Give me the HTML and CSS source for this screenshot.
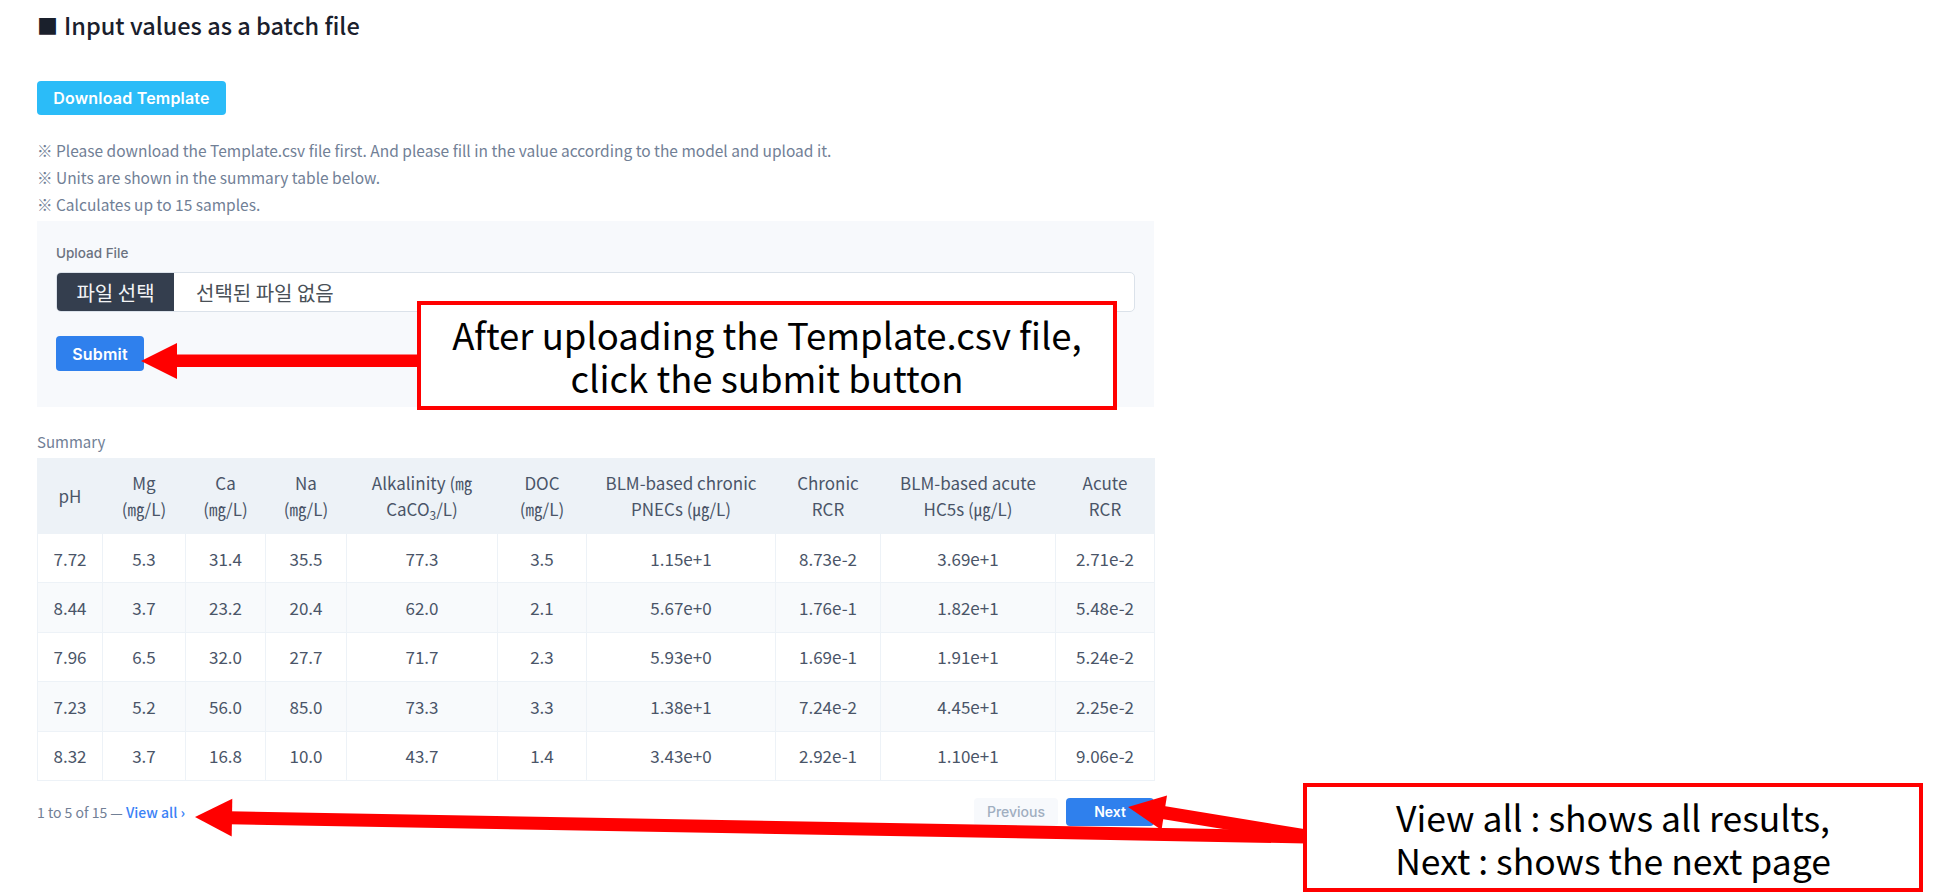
FILE: index.html
```html
<!DOCTYPE html>
<html lang="en">
<head>
<meta charset="utf-8">
<title>Input values as a batch file</title>
<link rel="stylesheet" href="styles.css">
</head>
<body>
<div class="page">
  <h2 class="title"><span class="sq">■</span>Input values as a batch file</h2>
  <button class="btn btn-sky" type="button">Download Template</button>
  <ul class="notes">
    <li>※ Please download the Template.csv file first. And please fill in the value according to the model and upload it.</li>
    <li>※ Units are shown in the summary table below.</li>
    <li>※ Calculates up to 15 samples.</li>
  </ul>
  <div class="panel">
    <div class="label">Upload File</div>
    <div class="file">
      <span class="file-btn">파일 선택</span>
      <span class="file-name">선택된 파일 없음</span>
    </div>
    <button class="btn btn-blue submit" type="button">Submit</button>
  </div>
  <div class="caption">Summary</div>
  <table class="summary">
    <colgroup>
      <col class="w-ph"><col class="w-mg"><col class="w-ca"><col class="w-na"><col class="w-alk">
      <col class="w-doc"><col class="w-pnec"><col class="w-crcr"><col class="w-hc5"><col class="w-arcr">
    </colgroup>
    <thead>
      <tr>
        <th>pH</th>
        <th>Mg<br>(㎎/L)</th>
        <th>Ca<br>(㎎/L)</th>
        <th>Na<br>(㎎/L)</th>
        <th>Alkalinity (㎎<br>CaCO<sub>3</sub>/L)</th>
        <th>DOC<br>(㎎/L)</th>
        <th>BLM-based chronic<br>PNECs (㎍/L)</th>
        <th>Chronic<br>RCR</th>
        <th>BLM-based acute<br>HC5s (㎍/L)</th>
        <th>Acute<br>RCR</th>
      </tr>
    </thead>
    <tbody>
      <tr><td>7.72</td><td>5.3</td><td>31.4</td><td>35.5</td><td>77.3</td><td>3.5</td><td>1.15e+1</td><td>8.73e-2</td><td>3.69e+1</td><td>2.71e-2</td></tr>
      <tr><td>8.44</td><td>3.7</td><td>23.2</td><td>20.4</td><td>62.0</td><td>2.1</td><td>5.67e+0</td><td>1.76e-1</td><td>1.82e+1</td><td>5.48e-2</td></tr>
      <tr><td>7.96</td><td>6.5</td><td>32.0</td><td>27.7</td><td>71.7</td><td>2.3</td><td>5.93e+0</td><td>1.69e-1</td><td>1.91e+1</td><td>5.24e-2</td></tr>
      <tr><td>7.23</td><td>5.2</td><td>56.0</td><td>85.0</td><td>73.3</td><td>3.3</td><td>1.38e+1</td><td>7.24e-2</td><td>4.45e+1</td><td>2.25e-2</td></tr>
      <tr><td>8.32</td><td>3.7</td><td>16.8</td><td>10.0</td><td>43.7</td><td>1.4</td><td>3.43e+0</td><td>2.92e-1</td><td>1.10e+1</td><td>9.06e-2</td></tr>
    </tbody>
  </table>
  <div class="pager">
    <div class="count">1 to 5 of 15 — <a class="view-all" href="#">View all <span class="chev">›</span></a></div>
    <div class="nav">
      <button class="pg prev" type="button">Previous</button>
      <button class="pg next" type="button">Next</button>
    </div>
  </div>
</div>

<svg class="arrows" width="1936" height="896" viewBox="0 0 1936 896" aria-hidden="true">
  <g fill="#ff0000" stroke="none">
    <rect x="175" y="354.5" width="244" height="12.5"/>
    <polygon points="141,361 177,343 177,379"/>
    <polygon points="195,817 232.3,798.7 231.7,836.6"/>
    <polygon points="1128,807 1167,795.5 1161.5,830"/>
  </g>
  <g stroke="#ff0000" stroke-width="13" fill="none">
    <line x1="1306" y1="837" x2="229" y2="817.7"/>
    <line x1="1306" y1="836" x2="1163" y2="812.5"/>
  </g>
</svg>

<div class="callout callout-1">After uploading the Template.csv file,<br>click the submit button</div>
<div class="callout callout-2">View all : shows all results,<br>Next : shows the next page</div>
</body>
</html>
```

FILE: styles.css
```css
* { box-sizing: border-box; }

html, body {
  margin: 0;
  padding: 0;
  background: #ffffff;
}

body {
  position: relative;
  width: 1936px;
  height: 896px;
  overflow: hidden;
  font-family: "Noto Sans CJK KR", "Noto Sans", sans-serif;
  color: #4a5568;
}

.page {
  width: 1154px;
  padding: 7px 0 0 37px;
}

.title {
  margin: 0;
  height: 36px;
  font-size: 23.5px;
  line-height: 36px;
  font-weight: 500;
  color: #1a202c;
  display: flex;
  align-items: center;
}

.sq {
  font-size: 21px;
  margin-right: 6px;
}

.btn {
  font-family: Inter, "Noto Sans", sans-serif;
  font-weight: 600;
  color: #ffffff;
  border: 0;
  padding: 0;
  cursor: pointer;
}

.btn-sky {
  display: block;
  margin-top: 38px;
  width: 189px;
  height: 34px;
  border-radius: 4px;
  background: #2bbcf8;
  font-size: 16px;
  letter-spacing: 0.2px;
}

.notes {
  list-style: none;
  margin: 22px 0 0;
  padding: 0;
  font-size: 15.5px;
  line-height: 27px;
  color: #718096;
}

.panel {
  margin-top: 3px;
  width: 1117px;
  background: #f7f9fc;
  padding: 22px 19px 36px;
}

.label {
  font-family: Inter, "Noto Sans", sans-serif;
  font-size: 13.5px;
  font-weight: 500;
  line-height: 20px;
  color: #6b7280;
}

.file {
  margin-top: 9px;
  display: flex;
  height: 40px;
  background: #ffffff;
  border: 1px solid #dbe2ea;
  border-radius: 5px;
  overflow: hidden;
}

.file-btn {
  width: 117px;
  background: #343e4e;
  color: #f3f4f6;
  display: flex;
  align-items: center;
  justify-content: center;
  font-size: 20px;
}

.file-name {
  display: flex;
  align-items: center;
  padding-left: 22px;
  font-size: 20px;
  color: #495057;
}

.submit {
  display: block;
  margin-top: 24px;
  width: 88px;
  height: 35px;
  border-radius: 4px;
  background: #2f80ed;
  font-size: 16px;
  letter-spacing: 0.2px;
}

.caption {
  margin-top: 24px;
  font-size: 15px;
  line-height: 22px;
  color: #718096;
}

.summary {
  margin-top: 5px;
  width: 1117px;
  border-collapse: collapse;
  table-layout: fixed;
}

.w-ph { width: 65px; }
.w-mg { width: 83px; }
.w-ca { width: 80px; }
.w-na { width: 81px; }
.w-alk { width: 151px; }
.w-doc { width: 89px; }
.w-pnec { width: 189px; }
.w-crcr { width: 105px; }
.w-hc5 { width: 175px; }
.w-arcr { width: 99px; }

.summary th,
.summary td {
  border: 1px solid #edf2f7;
  text-align: center;
  font-weight: 400;
  padding: 0 2px;
  color: #4a5568;
}

.summary th {
  height: 75px;
  background: #edf2f7;
  font-size: 17px;
  line-height: 26px;
}

.summary th sub {
  font-size: 12px;
  line-height: 0;
}

.summary td {
  height: 49.4px;
  font-size: 17px;
}

.summary tbody tr:nth-child(even) td {
  background: #f8fafc;
}

.pager {
  margin-top: 17px;
  width: 1117px;
  height: 28px;
  display: flex;
  align-items: center;
  justify-content: space-between;
}

.count {
  font-size: 14px;
  color: #718096;
}

.view-all {
  color: #3b82f6;
  text-decoration: none;
  font-weight: 500;
}

.chev {
  font-weight: 700;
}

.nav {
  display: flex;
  gap: 8px;
}

.pg {
  height: 28px;
  border: 0;
  border-radius: 4px;
  font-family: Inter, "Noto Sans", sans-serif;
  font-size: 14px;
  padding: 0;
  cursor: pointer;
}

.prev {
  width: 84px;
  background: #f7f9fc;
  color: #a0aec0;
  font-weight: 500;
}

.next {
  width: 88px;
  background: #2f80ed;
  color: #ffffff;
  font-weight: 600;
}

.arrows {
  position: absolute;
  left: 0;
  top: 0;
  pointer-events: none;
}

.callout {
  position: absolute;
  display: flex;
  align-items: center;
  justify-content: center;
  text-align: center;
  background: #ffffff;
  border: 4px solid #ff0000;
  color: #000000;
  font-family: "Noto Sans CJK KR", "Noto Sans", sans-serif;
  font-size: 36.5px;
  line-height: 43px;
}

.callout-1 {
  left: 417px;
  top: 301px;
  width: 700px;
  height: 109px;
}

.callout-2 {
  left: 1303px;
  top: 783px;
  width: 620px;
  height: 109px;
  font-size: 35.5px;
}
```
